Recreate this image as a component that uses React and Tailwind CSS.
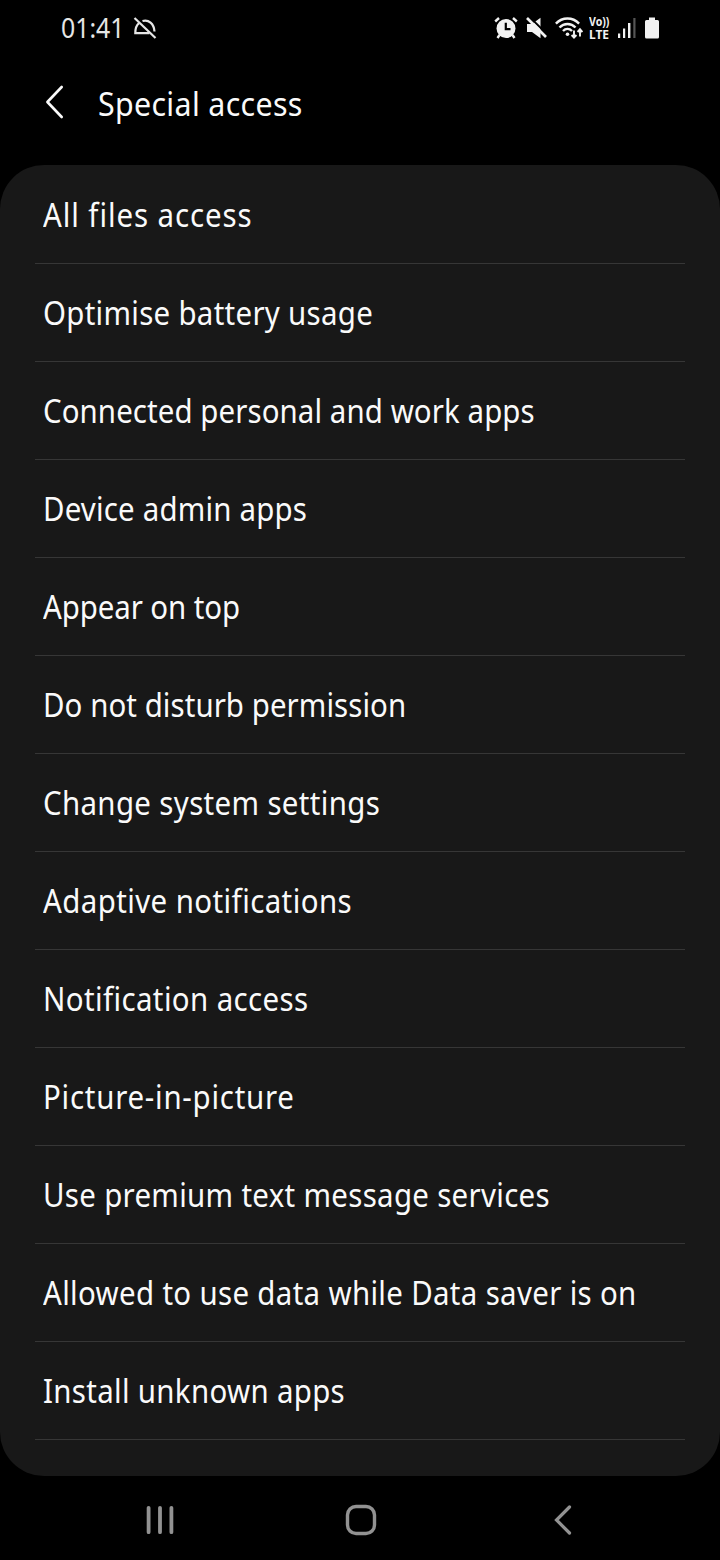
import React from 'react';

const items = [
  { label: 'All files access', className: 'tracking-[1px]' },
  { label: 'Optimise battery usage', className: 'tracking-[0.32px]' },
  { label: 'Connected personal and work apps', className: 'tracking-[0.09px]' },
  { label: 'Device admin apps', className: 'tracking-[0.2px]' },
  { label: 'Appear on top', className: 'tracking-[-0.1px]' },
  { label: 'Do not disturb permission', className: 'tracking-[0.07px]' },
  { label: 'Change system settings', className: 'tracking-[0.38px]' },
  { label: 'Adaptive notifications', className: 'tracking-[0.45px]' },
  { label: 'Notification access', className: 'tracking-[0.42px]' },
  { label: 'Picture-in-picture', className: 'tracking-[0.82px]' },
  { label: 'Use premium text message services', className: 'tracking-[0.34px]' },
  { label: 'Allowed to use data while Data saver is on', className: 'tracking-[0.36px]' },
  { label: 'Install unknown apps', className: 'tracking-[0.35px]' },
  { label: 'Usage data access', className: 'tracking-[-0.2px]' },
];

function BellOffIcon() {
  return (
    <svg width="24" height="24" viewBox="0 0 24 24" fill="none" stroke="#e6e6e6" strokeWidth="2.2">
      <path d="M6 7.2C3.5 9.2 2.3 12 2.3 17.2H16.5" />
      <path d="M9.5 5C15.5 3.2 21 7.5 21.5 15.5" />
      <path d="M1.5 2L22.5 22" />
    </svg>
  );
}

function AlarmIcon() {
  return (
    <svg width="24" height="24" viewBox="0 0 24 24" fill="none">
      <circle cx="12" cy="12.5" r="9.5" fill="#f2f2f2" />
      <path d="M1.2 5.5L5 2M22.8 5.5L19 2M5.5 19L3.5 22M18.5 19L20.5 22" stroke="#f2f2f2" strokeWidth="2.4" />
      <path d="M11.8 6.8V13.2H16.5" stroke="#000" strokeWidth="2.2" />
    </svg>
  );
}

function MuteIcon() {
  return (
    <svg width="22" height="22" viewBox="0 0 22 22" fill="none">
      <path d="M1 7H6L14.5 0.8V21.2L6 15H1Z" fill="#f2f2f2" />
      <path d="M2.8 -0.8L22.2 18.4" stroke="#000" strokeWidth="2" />
      <path d="M1 1L20 20" stroke="#f2f2f2" strokeWidth="2.6" />
    </svg>
  );
}

function WifiIcon() {
  return (
    <svg width="28" height="24" viewBox="0 0 28 24" fill="none" stroke="#f2f2f2" strokeWidth="2.4">
      <path d="M0.9 7.6C7.5 0.8 17.5 0.8 24.1 7.6" />
      <path d="M4.5 11.5C9 6.8 16 6.8 20.5 11.5" />
      <path d="M8 15C10.6 12.2 14.4 12.2 17 15" />
      <circle cx="12.5" cy="18.2" r="1.8" fill="#f2f2f2" stroke="none" />
      <path d="M19 14.5V21.5M16.6 19L19 21.6L21.4 19M25 20.5V13.5M22.6 16L25 13.3L27.4 16" strokeWidth="1.9" />
    </svg>
  );
}

function SignalIcon() {
  return (
    <svg width="18" height="21" viewBox="0 0 18 21" fill="#f2f2f2">
      <rect x="0" y="15.5" width="2.2" height="4.5" />
      <rect x="5" y="10.5" width="2.2" height="9.5" />
      <rect x="10" y="5" width="2.4" height="15" />
      <rect x="15.3" y="0" width="2.2" height="20" fill="#555" />
    </svg>
  );
}

function BatteryIcon() {
  return (
    <svg width="14" height="22" viewBox="0 0 14 22" fill="#f2f2f2">
      <path d="M4 0.5H10V3H12.5Q14 3 14 4.5V20Q14 21.5 12.5 21.5H1.5Q0 21.5 0 20V4.5Q0 3 1.5 3H4Z" />
    </svg>
  );
}

function StatusBar() {
  return (
    <div className="flex h-14 items-center pl-[61px] pr-[61px] text-[#e6e6e6]">
      <span className="w-[63px] origin-left scale-x-[0.92] whitespace-nowrap pb-px text-[27px] leading-none">01:41</span>
      <span className="ml-[9px]"><BellOffIcon /></span>
      <div className="ml-auto flex items-center">
        <AlarmIcon />
        <span className="ml-[8px]"><MuteIcon /></span>
        <span className="ml-[7px]"><WifiIcon /></span>
        <div className="ml-[6px] flex w-[21px] flex-col text-[12px] font-bold leading-[12px] text-[#f2f2f2]">
          <span className="origin-left scale-x-[0.88]">Vo))</span>
          <span className="origin-left scale-x-[0.92] text-[13px]">LTE</span>
        </div>
        <span className="ml-[8px]"><SignalIcon /></span>
        <span className="ml-[9px]"><BatteryIcon /></span>
      </div>
    </div>
  );
}

function Header() {
  return (
    <header className="flex h-[109px] items-center pb-[14px] pl-[45px]">
      <svg className="mb-[3px]" width="20" height="34" viewBox="0 0 20 34" fill="none" stroke="#fafafa" strokeWidth="2.6" strokeLinecap="round" strokeLinejoin="round">
        <path d="M16.7 2L2.4 17L16.7 32" />
      </svg>
      <h1 className="ml-[33px] origin-left scale-x-[0.92] whitespace-nowrap text-[33px] leading-none tracking-[0.36px]">Special access</h1>
    </header>
  );
}

function NavBar() {
  return (
    <nav className="flex h-[84px] items-center pb-px pl-[146px] pt-[5px]">
      <svg width="28" height="30" viewBox="0 0 28 30" fill="none" stroke="#929292" strokeWidth="3.8" strokeLinecap="round">
        <path d="M2.6 2.8V27.2M14 2.8V27.2M25.4 2.8V27.2" />
      </svg>
      <svg className="ml-[171px]" width="32" height="32" viewBox="0 0 32 32" fill="none" stroke="#929292" strokeWidth="3.4">
        <rect x="2.5" y="2.5" width="27" height="27" rx="8.5" />
      </svg>
      <svg className="ml-[177px]" width="18" height="30" viewBox="0 0 18 30" fill="none" stroke="#929292" strokeWidth="3.2" strokeLinecap="round">
        <path d="M15.5 2L2.5 15L15.5 28" />
      </svg>
    </nav>
  );
}

export default function App() {
  return (
    <div className="flex h-[1560px] w-[720px] flex-col overflow-hidden bg-black font-['Noto_Sans',sans-serif] text-[#fafafa]">
      <StatusBar />
      <Header />
      <main className="h-[1311px] overflow-hidden rounded-[44px] bg-[#181818] px-[35px] pt-px">
        {items.map((item) => (
          <div key={item.label} className="flex h-[98px] items-center border-b border-[#363636] pl-[7.5px]">
            <span className={`origin-left scale-x-[0.92] whitespace-nowrap text-[32px] leading-none ${item.className}`}>{item.label}</span>
          </div>
        ))}
      </main>
      <NavBar />
    </div>
  );
}
